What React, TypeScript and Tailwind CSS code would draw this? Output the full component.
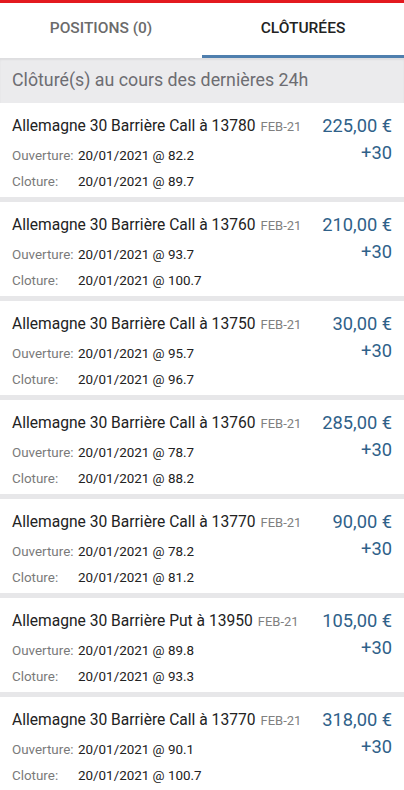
import React from "react";

interface Trade {
  name: string;
  amount: string;
  open: string;
  close: string;
}

const trades: Trade[] = [
  { name: "Allemagne 30 Barrière Call à 13780", amount: "225,00 €", open: "20/01/2021 @ 82.2", close: "20/01/2021 @ 89.7" },
  { name: "Allemagne 30 Barrière Call à 13760", amount: "210,00 €", open: "20/01/2021 @ 93.7", close: "20/01/2021 @ 100.7" },
  { name: "Allemagne 30 Barrière Call à 13750", amount: "30,00 €", open: "20/01/2021 @ 95.7", close: "20/01/2021 @ 96.7" },
  { name: "Allemagne 30 Barrière Call à 13760", amount: "285,00 €", open: "20/01/2021 @ 78.7", close: "20/01/2021 @ 88.2" },
  { name: "Allemagne 30 Barrière Call à 13770", amount: "90,00 €", open: "20/01/2021 @ 78.2", close: "20/01/2021 @ 81.2" },
  { name: "Allemagne 30 Barrière Put à 13950", amount: "105,00 €", open: "20/01/2021 @ 89.8", close: "20/01/2021 @ 93.3" },
  { name: "Allemagne 30 Barrière Call à 13770", amount: "318,00 €", open: "20/01/2021 @ 90.1", close: "20/01/2021 @ 100.7" },
];

function TradeCard({ t }: { t: Trade }) {
  return (
    <div className="flex h-[94px] bg-white px-3 pt-[14px]">
      <div className="flex-1">
        <div className="flex h-5 items-center whitespace-nowrap">
          <span className="text-[15.6px] text-[#222]">{t.name}</span>
          <span className="ml-[5px] text-[13px] text-[#808080]">FEB-21</span>
        </div>
        <div className="mt-[6px] flex h-[26px] items-center text-[13.4px]">
          <span className="w-[66px] text-[#7a7a7a]">Ouverture:</span>
          <span className="text-[#222]">{t.open}</span>
        </div>
        <div className="flex h-[26px] items-center text-[13.4px]">
          <span className="w-[66px] text-[#7a7a7a]">Cloture:</span>
          <span className="text-[#222]">{t.close}</span>
        </div>
      </div>
      <div className="flex flex-col items-end text-[18.3px] text-[#2f6189]">
        <div className="-mt-[1px] flex h-5 items-center">{t.amount}</div>
        <div className="mt-[5px] flex h-6 items-center">+30</div>
      </div>
    </div>
  );
}

export default function App() {
  return (
    <div
      className="h-[790px] w-[404px] overflow-hidden bg-[#e7e7e9]"
      style={{ fontFamily: "Roboto, 'Noto Sans', sans-serif" }}
    >
      <div className="h-[3px] bg-[#e3191f]" />
      <div className="flex h-[55px] bg-white text-[15.5px] font-medium">
        <div className="flex flex-1 items-center justify-center pb-[3px] text-[#6b6b6b]">
          POSITIONS (0)
        </div>
        <div className="flex flex-1 items-center justify-center border-b-[3px] border-[#4f7fae] text-[#222]">
          CLÔTURÉES
        </div>
      </div>
      <div className="flex h-[45px] items-center bg-[#ebebed] px-3 text-[17.8px] text-[#6d6d72] shadow-[inset_0_2px_2px_rgba(0,0,0,0.06)]">
        Clôturé(s) au cours des dernières 24h
      </div>
      <div className="flex flex-col gap-[5px]">
        {trades.map((t, i) => (
          <TradeCard key={i} t={t} />
        ))}
      </div>
    </div>
  );
}
